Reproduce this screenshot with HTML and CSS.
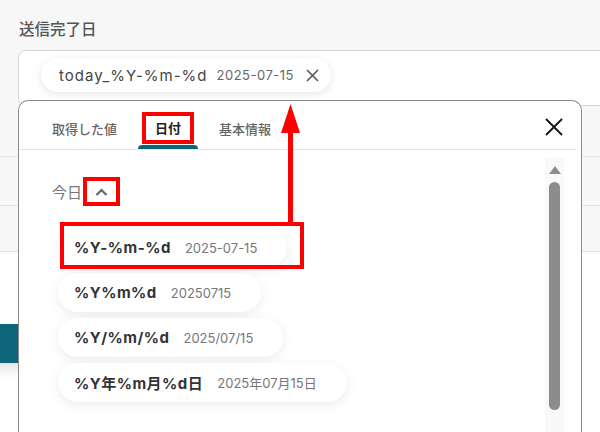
FILE: index.html
```html
<!DOCTYPE html>
<html>
<head>
  <title>送信完了日</title>
  <link rel="stylesheet" href="styles.css">
</head>
<body>
  <div class="page">
    <div class="field">
      <div class="label">送信完了日</div>
      <div class="input">
        <span class="chip">
          <span class="chip-name">today_%Y-%m-%d</span>
          <span class="chip-value">2025-07-15</span>
          <svg class="chip-x" width="13" height="13" viewBox="0 0 13 13"><path d="M1 1L12 12M12 1L1 12" stroke="#555" stroke-width="1.6" fill="none"/></svg>
        </span>
      </div>
    </div>
    <div class="rows">
      <div class="row r1"></div>
      <div class="row r2"></div>
      <div class="row r3"></div>
    </div>
    <div class="lower">
      <div class="btn"></div>
    </div>

    <div class="popup">
      <div class="popup-head">
        <div class="tabs">
          <div class="tab">取得した値</div>
          <div class="tab active"><span class="mark">日付</span></div>
          <div class="tab">基本情報</div>
        </div>
        <svg class="close" width="18" height="18" viewBox="0 0 18 18"><path d="M1 1L17 17M17 1L1 17" stroke="#111" stroke-width="1.8" fill="none"/></svg>
      </div>
      <div class="popup-body">
        <div class="list">
          <div class="group">
            <span class="group-name">今日</span>
            <span class="toggle">
              <svg width="13" height="8" viewBox="0 0 13 8"><path d="M1.5 7L6.5 2L11.5 7" stroke="#666" stroke-width="2.2" fill="none"/></svg>
            </span>
          </div>
          <div class="items">
            <div class="item picked"><b>%Y-%m-%d</b><span>2025-07-15</span></div>
            <div class="item"><b>%Y%m%d</b><span>20250715</span></div>
            <div class="item"><b>%Y/%m/%d</b><span>2025/07/15</span></div>
            <div class="item"><b>%Y年%m月%d日</b><span>2025年07月15日</span></div>
          </div>
        </div>
        <div class="scrollbar">
          <div class="up"></div>
          <div class="thumb"></div>
        </div>
      </div>
    </div>

    <svg class="arrow" width="23" height="122" viewBox="0 0 23 122">
      <polygon points="11.5,0 2,29 21,29" fill="#f00"/>
      <rect x="9" y="27" width="5" height="95" fill="#f00"/>
    </svg>
  </div>
</body>
</html>
```

FILE: styles.css
```css
body {
  margin: 0;
  background: #f7f7f7;
  font-family: "Inter", "Noto Sans CJK JP", sans-serif;
  overflow: hidden;
}
.page {
  position: relative;
  width: 600px;
  height: 432px;
  overflow: hidden;
}
.field {
  padding: 22px 0 0 18px;
}
.label {
  font-size: 15.5px;
  line-height: 16px;
  font-weight: 500;
  color: #555;
  margin-bottom: 12px;
  padding-left: 1px;
}
.input {
  height: 47px;
  margin-right: -20px;
  background: #fff;
  border: 1px solid #d3d6de;
  border-radius: 8px;
  padding: 7px 0 0 22px;
  box-sizing: content-box;
}
.chip {
  display: inline-flex;
  align-items: center;
  height: 34px;
  padding: 0 12px 0 18px;
  background: #fff;
  border-radius: 17px;
  box-shadow: 0 2px 9px rgba(0, 0, 0, 0.1);
}
.chip-name {
  font-size: 15px;
  letter-spacing: 1px;
  color: #444;
}
.chip-value {
  font-size: 13px;
  letter-spacing: 0.5px;
  color: #666;
  margin-left: 9px;
}
.chip-x {
  margin-left: 12px;
}
.rows {
  background: #f7f7f7;
}
.row {
  border-bottom: 1px solid #e2e2e2;
}
.r1 { height: 50px; }
.r2 { height: 48px; }
.r3 { height: 45px; }
.lower {
  background: #fff;
  height: 200px;
  padding-top: 72px;
  box-sizing: border-box;
}
.btn {
  width: 140px;
  height: 39px;
  margin-left: -20px;
  background: #0d657c;
  box-shadow: 0 6px 12px rgba(0, 0, 0, 0.12);
}

.popup {
  position: absolute;
  left: 18px;
  top: 100px;
  width: 562px;
  height: 340px;
  background: #fff;
  border: 1px solid #8c8c8c;
  border-bottom: none;
  border-radius: 10px 10px 0 0;
}
.popup-head {
  display: flex;
  align-items: center;
  height: 48px;
  margin-right: 4px;
  border-bottom: 1px solid #e4e4e4;
}
.tabs {
  display: flex;
  gap: 4px;
  padding-left: 16px;
  align-self: stretch;
}
.tab {
  position: relative;
  display: flex;
  align-items: center;
  padding: 6px 17px 0;
  font-size: 13px;
  font-weight: 500;
  color: #666;
}
.tab.active {
  color: #222;
  font-weight: 700;
}
.tab.active::after {
  content: "";
  position: absolute;
  left: 0;
  right: 0;
  bottom: 0;
  height: 4px;
  border-radius: 4px 4px 0 0;
  background: #0d657c;
}
.mark {
  padding: 4px 9px;
  margin: 0 -9px;
  outline: 4px solid #f00;
  line-height: 16px;
}
.close {
  margin-left: auto;
  margin-right: 14px;
  margin-top: 4px;
}
.popup-body {
  display: flex;
}
.list {
  flex: 1;
  padding: 27px 0 0 33px;
}
.group {
  display: flex;
  align-items: center;
  height: 29px;
}
.group-name {
  font-size: 15px;
  color: #777;
  width: 31px;
}
.toggle {
  display: flex;
  align-items: center;
  justify-content: center;
  width: 29px;
  height: 21px;
  border: 4px solid #f00;
}
.items {
  display: flex;
  flex-direction: column;
  align-items: flex-start;
  gap: 6px;
  margin-top: 22px;
  padding-left: 6px;
}
.item {
  position: relative;
  display: flex;
  align-items: center;
  gap: 14px;
  height: 39px;
  padding: 0 30px 0 16px;
  background: #fff;
  border-radius: 20px;
  box-shadow: 0 3px 12px rgba(0, 0, 0, 0.08);
}
.item b {
  font-size: 15px;
  font-weight: 700;
  letter-spacing: 0.5px;
  color: #333;
}
.item span {
  font-size: 13px;
  color: #777;
}
.picked::after {
  content: "";
  position: absolute;
  top: -6px;
  left: 2px;
  right: -17px;
  bottom: -2px;
  border: 4px solid #f00;
}
.scrollbar {
  width: 19px;
  height: 280px;
  margin: 8px 17px 0 0;
  background: #f9f9f9;
  display: flex;
  flex-direction: column;
  align-items: center;
}
.up {
  width: 0;
  height: 0;
  margin-top: 8px;
  border-left: 6px solid transparent;
  border-right: 6px solid transparent;
  border-bottom: 8px solid #8c8c8c;
}
.thumb {
  width: 11px;
  height: 228px;
  margin-top: 8px;
  border-radius: 6px;
  background: #8c8c8c;
}
.arrow {
  position: absolute;
  left: 279px;
  top: 104px;
}
```
